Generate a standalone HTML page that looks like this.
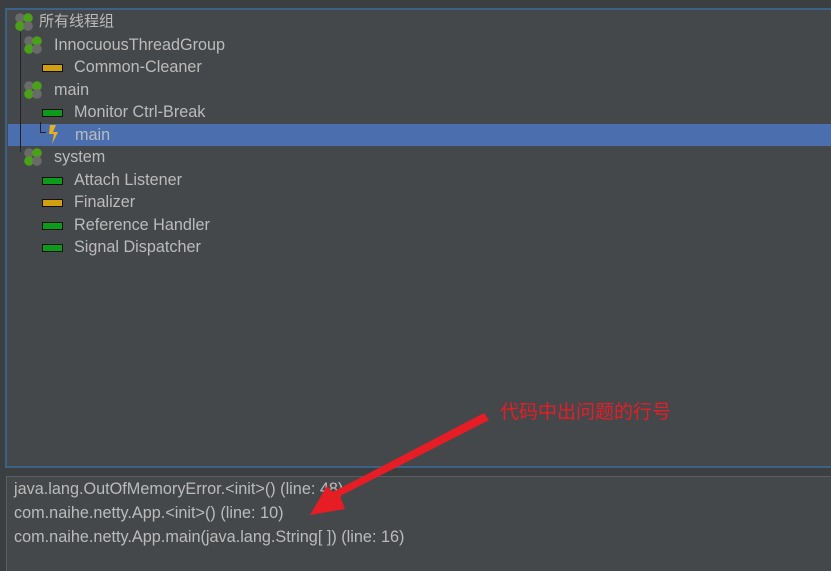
<!DOCTYPE html><html><head><style>
html,body{margin:0;width:831px;height:571px;overflow:hidden}
body{background:#3c3f41;position:relative;font-family:"Liberation Sans","Noto Sans CJK SC",sans-serif;color:#bbbbbb}
.top{position:absolute;left:5px;top:8px;width:840px;height:460px;border:2px solid #3d6185;background:#45484b;box-sizing:border-box}
.bot{position:absolute;left:6px;top:476px;width:840px;height:94px;border:1px solid #5a5d5f;border-bottom:none;background:#45484b}
.row{position:absolute;height:22px;line-height:22px;font-size:16.2px;white-space:nowrap}
.sel{position:absolute;left:8px;top:124px;width:823px;height:22px;background:#4b6eaf}
.bar{position:absolute;width:19px;height:6px;border:1px solid #111}
.g{background:#0c9b1a}.y{background:#d2a00e}
.ln{position:absolute;background:#222;}
.bt{position:absolute;left:14px;font-size:17px;transform:scaleX(0.955);transform-origin:0 0;color:#bbbbbb;white-space:nowrap}
</style></head><body>
<div class="top"></div>
<div class="sel"></div>
<div class="ln" style="left:20px;top:32px;width:1px;height:120px"></div>
<div class="ln" style="left:40px;top:122px;width:1px;height:10px"></div>
<div class="ln" style="left:40px;top:132px;width:6px;height:1px"></div>
<svg style="position:absolute;left:0;top:0" width="831" height="571">
<defs><g id="cl"><circle cx="5" cy="5" r="4.8" fill="#6a6a6a"/><circle cx="13" cy="5" r="4.8" fill="#4aa018"/><circle cx="5" cy="13" r="4.8" fill="#4aa018"/><circle cx="13" cy="13" r="4.8" fill="#6a6a6a"/></g></defs>
<use href="#cl" x="15" y="13"/><use href="#cl" x="24" y="36"/><use href="#cl" x="24" y="81"/><use href="#cl" x="24" y="148"/>
<path d="M50 125 L56 125 L53 132 L58 132 L52 144 L54 134 L49 134 Z" fill="#e8b020"/>
<text x="500" y="418" font-size="19" fill="#e61d25" font-family="Noto Sans CJK SC,sans-serif">代码中出问题的行号</text>
</svg>
<div class="bar y" style="left:42px;top:64px"></div>
<div class="bar g" style="left:42px;top:109px"></div>
<div class="bar g" style="left:42px;top:177px"></div>
<div class="bar y" style="left:42px;top:199px"></div>
<div class="bar g" style="left:42px;top:222px"></div>
<div class="bar g" style="left:42px;top:244px"></div>
<div class="row" style="left:39px;top:11px;font-size:15px">所有线程组</div>
<div class="row" style="left:54px;top:34px">InnocuousThreadGroup</div>
<div class="row" style="left:74px;top:56px">Common-Cleaner</div>
<div class="row" style="left:54px;top:79px">main</div>
<div class="row" style="left:74px;top:101px">Monitor Ctrl-Break</div>
<div class="row" style="left:75px;top:124px">main</div>
<div class="row" style="left:54px;top:146px">system</div>
<div class="row" style="left:74px;top:169px">Attach Listener</div>
<div class="row" style="left:74px;top:191px">Finalizer</div>
<div class="row" style="left:74px;top:214px">Reference Handler</div>
<div class="row" style="left:74px;top:236px">Signal Dispatcher</div>
<div class="bot"></div>
<div class="bt" style="top:479px">java.lang.OutOfMemoryError.&lt;init&gt;() (line: 48)</div>
<div class="bt" style="top:503px">com.naihe.netty.App.&lt;init&gt;() (line: 10)</div>
<div class="bt" style="top:527px">com.naihe.netty.App.main(java.lang.String[ ]) (line: 16)</div>
<svg style="position:absolute;left:0;top:0" width="831" height="571"><polygon points="484,413 489,420 340,496 345,509 310,515 327,486 333,492" fill="#e61d25"/></svg>
</body></html>
